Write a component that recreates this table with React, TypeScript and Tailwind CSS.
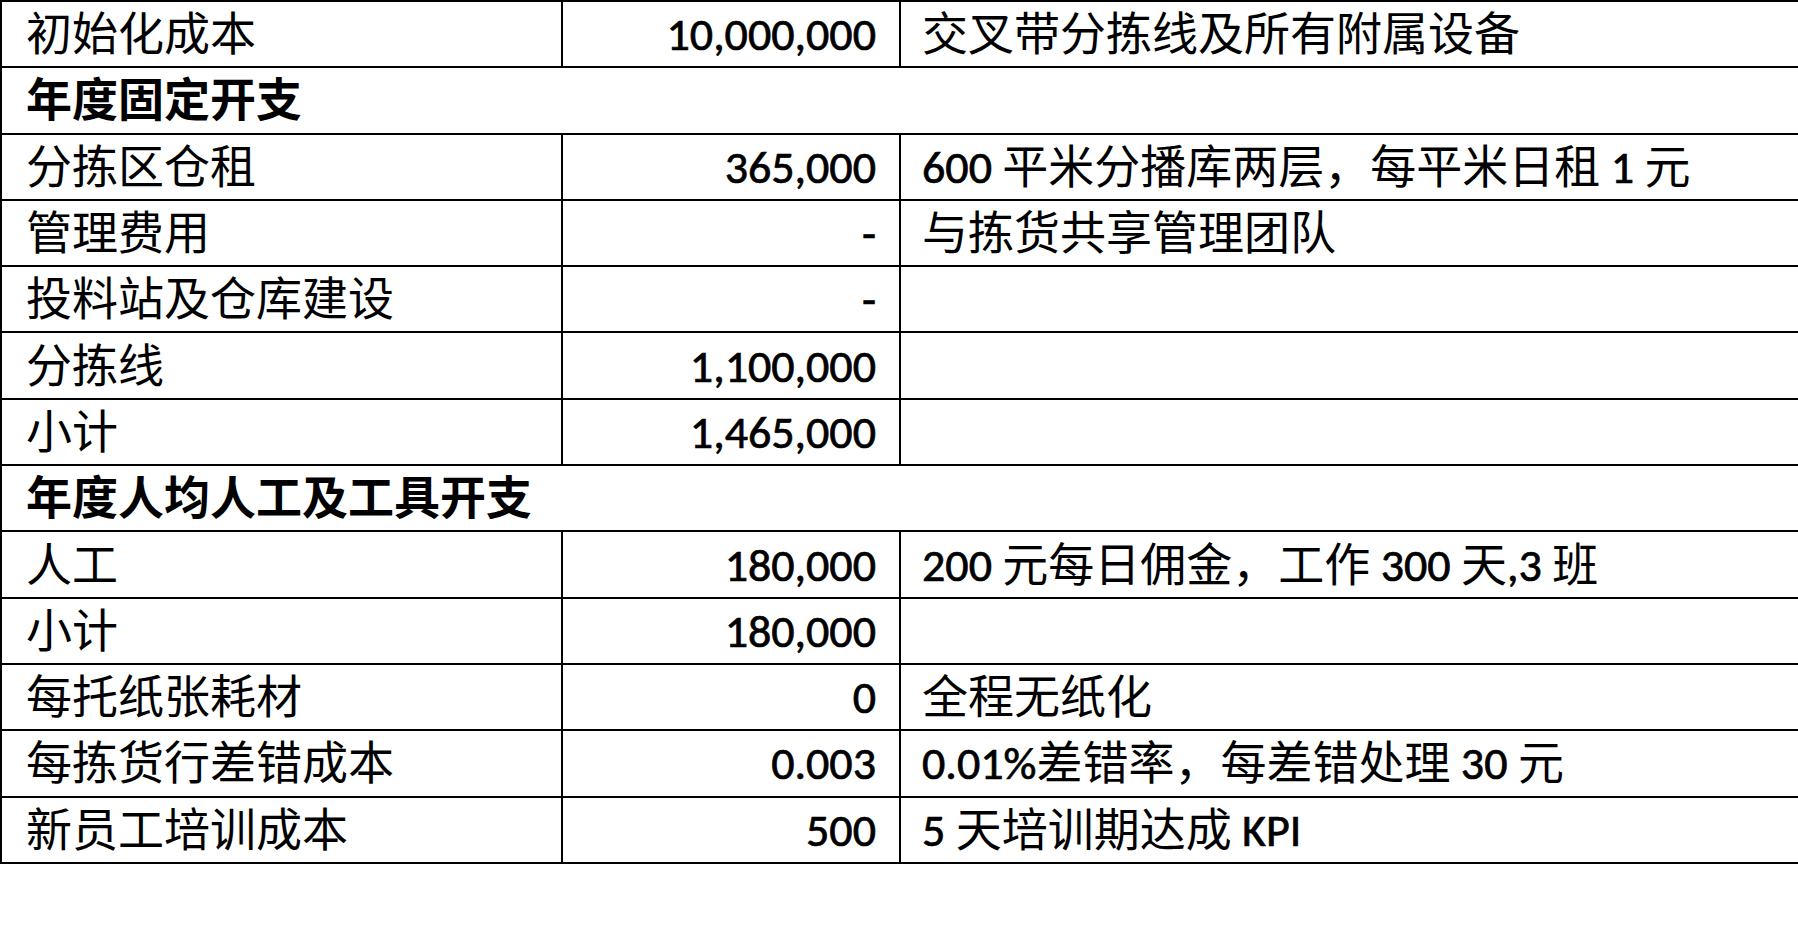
type Row = { a: string; b?: string; c?: string; header?: boolean };

const ROWS: Row[] = [
  { a: "初始化成本", b: "10,000,000", c: "交叉带分拣线及所有附属设备" },
  { a: "年度固定开支", header: true },
  { a: "分拣区仓租", b: "365,000", c: "600 平米分播库两层，每平米日租 1 元" },
  { a: "管理费用", b: "-", c: "与拣货共享管理团队" },
  { a: "投料站及仓库建设", b: "-", c: "" },
  { a: "分拣线", b: "1,100,000", c: "" },
  { a: "小计", b: "1,465,000", c: "" },
  { a: "年度人均人工及工具开支", header: true },
  { a: "人工", b: "180,000", c: "200 元每日佣金，工作 300 天,3 班" },
  { a: "小计", b: "180,000", c: "" },
  { a: "每托纸张耗材", b: "0", c: "全程无纸化" },
  { a: "每拣货行差错成本", b: "0.003", c: "0.01%差错率，每差错处理 30 元" },
  { a: "新员工培训成本", b: "500", c: "5 天培训期达成 KPI" },
];

// latin runs are a touch heavier in the source, thicken them slightly
const Mixed = ({ text }: { text: string }) => (
  <>
    {text.split(/([\x20-\x7e]+)/).map((part, i) =>
      /[\x21-\x7e]/.test(part) ? (
        <span key={i} className="[-webkit-text-stroke:0.7px_black]">
          {part}
        </span>
      ) : (
        <span key={i}>{part}</span>
      )
    )}
  </>
);

const App = () => {
  return (
    <div className="w-screen h-screen overflow-hidden bg-white">
      <div
        className="w-[1830px] border-t-2 border-l-2 border-black text-black text-[46px] leading-none"
        style={{ fontFamily: '"Carlito", "Liberation Sans Narrow", "Liberation Sans", "Noto Sans CJK SC", sans-serif' }}
      >
        {ROWS.map((row, i) =>
          row.header ? (
            <div key={i} className="flex items-center h-[66.3px] border-b-2 border-black pl-[24px] font-bold">
              {row.a}
            </div>
          ) : (
            <div key={i} className="grid grid-cols-[561px_338px_1fr] h-[66.3px] border-b-2 border-black">
              <div className="flex items-center pl-[24px] border-r-2 border-black">{row.a}</div>
              <div className="flex items-center justify-end pr-[23px] border-r-2 border-black [-webkit-text-stroke:0.7px_black]">
                {row.b}
              </div>
              <div className="flex items-center whitespace-pre pl-[21px]">
                <Mixed text={row.c ?? ""} />
              </div>
            </div>
          )
        )}
      </div>
    </div>
  );
};

export default App;
